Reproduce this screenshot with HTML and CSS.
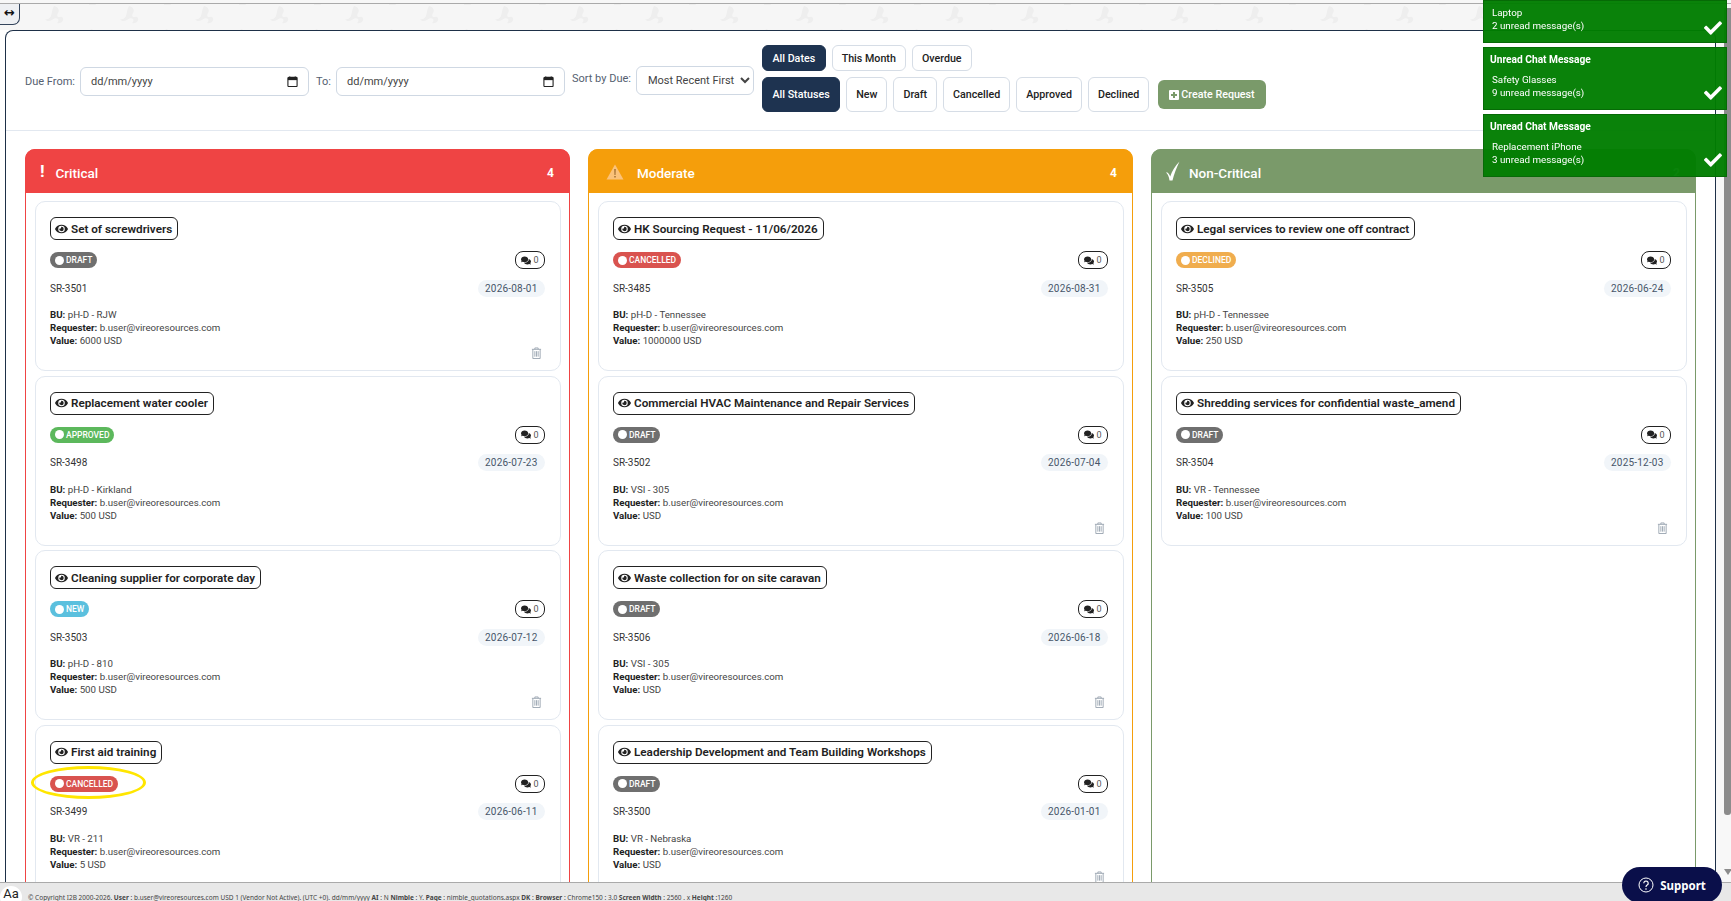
FILE: index.html
```html
<!DOCTYPE html>
<html lang="en">
<head>
  <meta charset="UTF-8">
  <title>Requests</title>
  <link rel="stylesheet" href="styles.css">
</head>
<body>
  <svg class="icon-defs" aria-hidden="true">
    <symbol id="i-eye" viewBox="0 0 576 512"><path d="M572.52 241.4C518.29 135.59 410.93 64 288 64S57.68 135.64 3.48 241.41a32.35 32.35 0 0 0 0 29.19C57.71 376.41 165.07 448 288 448s230.32-71.64 284.52-177.41a32.35 32.35 0 0 0 0-29.19zM288 400a144 144 0 1 1 144-144 143.93 143.93 0 0 1-144 144zm0-240a95.31 95.31 0 0 0-25.31 3.79 47.85 47.85 0 0 1-66.9 66.9A95.78 95.78 0 1 0 288 160z"/></symbol>
    <symbol id="i-comments" viewBox="0 0 576 512"><path d="M416 192c0-88.4-93.1-160-208-160S0 103.6 0 192c0 34.3 14.1 65.9 38 92-13.4 30.2-35.5 54.2-35.8 54.5-2.2 2.3-2.8 5.7-1.5 8.7S4.8 352 8 352c36.6 0 66.9-12.3 88.7-25 32.2 15.7 70.3 25 111.3 25 114.9 0 208-71.6 208-160zm122 220c23.9-26 38-57.7 38-92 0-66.9-53.5-124.2-129.3-148.1.9 6.6 1.3 13.3 1.3 20.1 0 105.9-107.7 192-240 192-10.8 0-21.3-.8-31.7-1.9C207.8 439.6 281.8 480 368 480c41 0 79.1-9.2 111.3-25 21.8 12.7 52.1 25 88.7 25 3.2 0 6.1-1.9 7.3-4.8 1.3-2.9.7-6.3-1.5-8.7-.3-.3-22.4-24.2-35.8-54.5z"/></symbol>
    <symbol id="i-check" viewBox="0 0 512 512"><path d="M173.898 439.404l-166.4-166.4c-9.997-9.997-9.997-26.206 0-36.204l36.203-36.204c9.997-9.998 26.207-9.998 36.204 0L192 312.69 432.095 72.596c9.997-9.997 26.207-9.997 36.204 0l36.203 36.204c9.997 9.997 9.997 26.206 0 36.204l-294.4 294.401c-9.998 9.997-26.207 9.997-36.204-.001z"/></symbol>
    <symbol id="i-trash" viewBox="0 0 12 13"><path d="M1 2.5h10M4.2 2.5V1h3.6v1.5M2 2.5v10h8v-10M4.2 4.5v6M6 4.5v6M7.8 4.5v6" fill="none" stroke="currentColor" stroke-width="1"/></symbol>
    <symbol id="i-calendar" viewBox="0 0 12 12"><path d="M3 0.5v2M9 0.5v2" stroke="#222" stroke-width="1.2"/><rect x="1" y="1.5" width="10" height="10" rx="1" fill="none" stroke="#222" stroke-width="1.2"/><rect x="1" y="1.5" width="10" height="3" fill="#222"/></symbol>
  </svg>

  <div class="toggle-tab">&#8596;</div>

  <div class="top-strip"></div>

  <div class="workspace">
    <div class="frame">
      <div class="filters">
        <div class="date-filters">
          <label class="filter-label">Due From:</label>
          <div class="date-input"><span>dd/mm/yyyy</span><svg class="calendar"><use href="#i-calendar"/></svg></div>
          <label class="filter-label">To:</label>
          <div class="date-input"><span>dd/mm/yyyy</span><svg class="calendar"><use href="#i-calendar"/></svg></div>
        </div>
        <label class="filter-label sort-label">Sort by Due:</label>
        <select class="sort-select">
          <option>Most Recent First</option>
        </select>
        <div class="button-rows">
          <div class="button-row">
            <button class="pill pill-active">All Dates</button>
            <button class="pill">This Month</button>
            <button class="pill">Overdue</button>
          </div>
          <div class="button-row">
            <button class="pill pill-tall pill-active">All Statuses</button>
            <button class="pill pill-tall">New</button>
            <button class="pill pill-tall">Draft</button>
            <button class="pill pill-tall">Cancelled</button>
            <button class="pill pill-tall">Approved</button>
            <button class="pill pill-tall">Declined</button>
            <button class="create-btn"><svg class="plus" viewBox="0 0 10 10"><path d="M1 0h8a1 1 0 0 1 1 1v8a1 1 0 0 1-1 1H1a1 1 0 0 1-1-1V1a1 1 0 0 1 1-1zM4 2v2H2v2h2v2h2V6h2V4H6V2z" fill-rule="evenodd"/></svg>Create Request</button>
          </div>
        </div>
      </div>

      <div class="board">
        <section class="column column-critical">
          <header class="column-head">
            <span class="head-icon head-bang">!</span>
            <span class="head-title">Critical</span>
            <span class="head-count">4</span>
          </header>
          <div class="column-body">
            <article class="card">
              <div class="card-title"><svg class="eye"><use href="#i-eye"/></svg>Set of screwdrivers</div>
              <div class="card-row card-row-status">
                <span class="status status-draft"><i class="dot"></i>DRAFT</span>
                <span class="comments"><svg class="bubble"><use href="#i-comments"/></svg>0</span>
              </div>
              <div class="card-row card-row-ref">
                <span>SR-3501</span>
                <span class="due">2026-08-01</span>
              </div>
              <div class="card-foot">
                <div class="details">
                  <div><b>BU:</b> pH-D - RJW</div>
                  <div><b>Requester:</b> b.user@vireoresources.com</div>
                  <div><b>Value:</b> 6000 USD</div>
                </div>
                <svg class="trash"><use href="#i-trash"/></svg>
              </div>
            </article>
            <article class="card">
              <div class="card-title"><svg class="eye"><use href="#i-eye"/></svg>Replacement water cooler</div>
              <div class="card-row card-row-status">
                <span class="status status-approved"><i class="dot"></i>APPROVED</span>
                <span class="comments"><svg class="bubble"><use href="#i-comments"/></svg>0</span>
              </div>
              <div class="card-row card-row-ref">
                <span>SR-3498</span>
                <span class="due">2026-07-23</span>
              </div>
              <div class="card-foot">
                <div class="details">
                  <div><b>BU:</b> pH-D - Kirkland</div>
                  <div><b>Requester:</b> b.user@vireoresources.com</div>
                  <div><b>Value:</b> 500 USD</div>
                </div>
              </div>
            </article>
            <article class="card">
              <div class="card-title"><svg class="eye"><use href="#i-eye"/></svg>Cleaning supplier for corporate day</div>
              <div class="card-row card-row-status">
                <span class="status status-new"><i class="dot"></i>NEW</span>
                <span class="comments"><svg class="bubble"><use href="#i-comments"/></svg>0</span>
              </div>
              <div class="card-row card-row-ref">
                <span>SR-3503</span>
                <span class="due">2026-07-12</span>
              </div>
              <div class="card-foot">
                <div class="details">
                  <div><b>BU:</b> pH-D - 810</div>
                  <div><b>Requester:</b> b.user@vireoresources.com</div>
                  <div><b>Value:</b> 500 USD</div>
                </div>
                <svg class="trash"><use href="#i-trash"/></svg>
              </div>
            </article>
            <article class="card">
              <div class="card-title"><svg class="eye"><use href="#i-eye"/></svg>First aid training</div>
              <div class="card-row card-row-status">
                <span class="status status-cancelled"><i class="dot"></i>CANCELLED</span>
                <span class="comments"><svg class="bubble"><use href="#i-comments"/></svg>0</span>
              </div>
              <div class="card-row card-row-ref">
                <span>SR-3499</span>
                <span class="due">2026-06-11</span>
              </div>
              <div class="card-foot">
                <div class="details">
                  <div><b>BU:</b> VR - 211</div>
                  <div><b>Requester:</b> b.user@vireoresources.com</div>
                  <div><b>Value:</b> 5 USD</div>
                </div>
              </div>
              <div class="highlight-ring"></div>
            </article>
          </div>
        </section>

        <section class="column column-moderate">
          <header class="column-head">
            <svg class="head-warning" viewBox="0 0 18 16"><path d="M9 0.5L17.5 15.5H0.5z" fill="#fbc27a"/><path d="M8.4 5h1.2l-.2 6h-.8zM8.4 12h1.2v1.6H8.4z" fill="#8a5a20"/></svg>
            <span class="head-title">Moderate</span>
            <span class="head-count">4</span>
          </header>
          <div class="column-body">
            <article class="card">
              <div class="card-title"><svg class="eye"><use href="#i-eye"/></svg>HK Sourcing Request - 11/06/2026</div>
              <div class="card-row card-row-status">
                <span class="status status-cancelled"><i class="dot"></i>CANCELLED</span>
                <span class="comments"><svg class="bubble"><use href="#i-comments"/></svg>0</span>
              </div>
              <div class="card-row card-row-ref">
                <span>SR-3485</span>
                <span class="due">2026-08-31</span>
              </div>
              <div class="card-foot">
                <div class="details">
                  <div><b>BU:</b> pH-D - Tennessee</div>
                  <div><b>Requester:</b> b.user@vireoresources.com</div>
                  <div><b>Value:</b> 1000000 USD</div>
                </div>
              </div>
            </article>
            <article class="card">
              <div class="card-title"><svg class="eye"><use href="#i-eye"/></svg>Commercial HVAC Maintenance and Repair Services</div>
              <div class="card-row card-row-status">
                <span class="status status-draft"><i class="dot"></i>DRAFT</span>
                <span class="comments"><svg class="bubble"><use href="#i-comments"/></svg>0</span>
              </div>
              <div class="card-row card-row-ref">
                <span>SR-3502</span>
                <span class="due">2026-07-04</span>
              </div>
              <div class="card-foot">
                <div class="details">
                  <div><b>BU:</b> VSI - 305</div>
                  <div><b>Requester:</b> b.user@vireoresources.com</div>
                  <div><b>Value:</b> USD</div>
                </div>
                <svg class="trash"><use href="#i-trash"/></svg>
              </div>
            </article>
            <article class="card">
              <div class="card-title"><svg class="eye"><use href="#i-eye"/></svg>Waste collection for on site caravan</div>
              <div class="card-row card-row-status">
                <span class="status status-draft"><i class="dot"></i>DRAFT</span>
                <span class="comments"><svg class="bubble"><use href="#i-comments"/></svg>0</span>
              </div>
              <div class="card-row card-row-ref">
                <span>SR-3506</span>
                <span class="due">2026-06-18</span>
              </div>
              <div class="card-foot">
                <div class="details">
                  <div><b>BU:</b> VSI - 305</div>
                  <div><b>Requester:</b> b.user@vireoresources.com</div>
                  <div><b>Value:</b> USD</div>
                </div>
                <svg class="trash"><use href="#i-trash"/></svg>
              </div>
            </article>
            <article class="card">
              <div class="card-title"><svg class="eye"><use href="#i-eye"/></svg>Leadership Development and Team Building Workshops</div>
              <div class="card-row card-row-status">
                <span class="status status-draft"><i class="dot"></i>DRAFT</span>
                <span class="comments"><svg class="bubble"><use href="#i-comments"/></svg>0</span>
              </div>
              <div class="card-row card-row-ref">
                <span>SR-3500</span>
                <span class="due">2026-01-01</span>
              </div>
              <div class="card-foot">
                <div class="details">
                  <div><b>BU:</b> VR - Nebraska</div>
                  <div><b>Requester:</b> b.user@vireoresources.com</div>
                  <div><b>Value:</b> USD</div>
                </div>
                <svg class="trash"><use href="#i-trash"/></svg>
              </div>
            </article>
          </div>
        </section>

        <section class="column column-noncritical">
          <header class="column-head">
            <svg class="head-tick" viewBox="0 0 14 20"><path d="M.5 11c1.700.6 3 2.300 3.700 4.500C6 10 9 5 13.500.5 10.500 7 8 13 6.500 19.500H3.500C3 16 2 13.500.5 12z" fill="#fff"/></svg>
            <span class="head-title">Non-Critical</span>
            <span class="head-count">2</span>
          </header>
          <div class="column-body">
            <article class="card">
              <div class="card-title"><svg class="eye"><use href="#i-eye"/></svg>Legal services to review one off contract</div>
              <div class="card-row card-row-status">
                <span class="status status-declined"><i class="dot"></i>DECLINED</span>
                <span class="comments"><svg class="bubble"><use href="#i-comments"/></svg>0</span>
              </div>
              <div class="card-row card-row-ref">
                <span>SR-3505</span>
                <span class="due">2026-06-24</span>
              </div>
              <div class="card-foot">
                <div class="details">
                  <div><b>BU:</b> pH-D - Tennessee</div>
                  <div><b>Requester:</b> b.user@vireoresources.com</div>
                  <div><b>Value:</b> 250 USD</div>
                </div>
              </div>
            </article>
            <article class="card">
              <div class="card-title"><svg class="eye"><use href="#i-eye"/></svg>Shredding services for confidential waste_amend</div>
              <div class="card-row card-row-status">
                <span class="status status-draft"><i class="dot"></i>DRAFT</span>
                <span class="comments"><svg class="bubble"><use href="#i-comments"/></svg>0</span>
              </div>
              <div class="card-row card-row-ref">
                <span>SR-3504</span>
                <span class="due">2025-12-03</span>
              </div>
              <div class="card-foot">
                <div class="details">
                  <div><b>BU:</b> VR - Tennessee</div>
                  <div><b>Requester:</b> b.user@vireoresources.com</div>
                  <div><b>Value:</b> 100 USD</div>
                </div>
                <svg class="trash"><use href="#i-trash"/></svg>
              </div>
            </article>
          </div>
        </section>
      </div>
    </div>

    <div class="scrollbar">
      <div class="scroll-thumb"></div>
      <div class="scroll-arrow"></div>
    </div>
  </div>

  <footer class="footer">
    <span class="font-badge">Aa</span>
    <span class="footer-text">&copy; Copyright I2B 2000-2026. <b>User</b> : b.user@vireoresources.com USD 1 (Vendor Not Active). (UTC +0). dd/mm/yyyy <b>AI</b> : N <b>Nimble</b> : Y. <b>Page</b> : nimble_quotations.aspx <b>DK</b> : <b>Browser</b> : Chrome150 : 3.0 <b>Screen Width</b> : 2560 . x <b>Height</b> :1260</span>
  </footer>

  <button class="support-btn">
    <svg class="support-icon" viewBox="0 0 16 16"><circle cx="8" cy="8" r="7" fill="none" stroke="#fff" stroke-width="1"/><path d="M5.8 6.2a2.2 2.2 0 1 1 3.4 1.9c-.8.5-1.2.9-1.2 1.8" fill="none" stroke="#fff" stroke-width="1.2"/><circle cx="8" cy="12" r=".8" fill="#fff"/></svg>
    Support
  </button>

  <div class="toasts">
    <div class="toast toast-first">
      <div class="toast-body">Laptop<br>2 unread message(s)</div>
      <svg class="toast-check"><use href="#i-check"/></svg>
    </div>
    <div class="toast">
      <div class="toast-title">Unread Chat Message</div>
      <div class="toast-body">Safety Glasses<br>9 unread message(s)</div>
      <svg class="toast-check"><use href="#i-check"/></svg>
    </div>
    <div class="toast">
      <div class="toast-title">Unread Chat Message</div>
      <div class="toast-body">Replacement iPhone<br>3 unread message(s)</div>
      <svg class="toast-check"><use href="#i-check"/></svg>
    </div>
  </div>
</body>
</html>
```

FILE: styles.css
```css
* {
  box-sizing: border-box;
}
html, body {
  height: 100%;
}
body {
  margin: 0;
  height: 100vh;
  overflow: hidden;
  display: flex;
  flex-direction: column;
  background: #f7f7f7;
  color: #222;
  font-family: Roboto, "Liberation Sans", sans-serif;
  font-size: 10px;
}
.icon-defs {
  position: absolute;
  width: 0;
  height: 0;
}

.top-strip {
  flex: none;
  height: 27px;
  margin-top: 3px;
  border-top: 1px solid #aaa;
  background-color: #f6f6f6;
  background-image: url("data:image/svg+xml,%3Csvg xmlns='http://www.w3.org/2000/svg' width='75' height='30'%3E%3Cg id='a' fill='%23eeeeee'%3E%3Cpath d='M13 1c4 1 6 4 4 7-1 2-1 3 0 4 2 0 4-1 5 1 1 3-2 6-6 5 1-1 2-2 1-4-1-1-4-1-6 1-3 2-6 1-7-1 3 1 5-1 6-3 1-3 1-7 3-10z'/%3E%3C/g%3E%3Cpath transform='translate(37 23)' fill='%23eeeeee' d='M13 1c4 1 6 4 4 7-1 2-1 3 0 4 2 0 4-1 5 1 1 3-2 6-6 5 1-1 2-2 1-4-1-1-4-1-6 1-3 2-6 1-7-1 3 1 5-1 6-3 1-3 1-7 3-10z'/%3E%3C/svg%3E");
  background-position: 41px 1px;
}
.toggle-tab {
  position: absolute;
  top: 4px;
  left: 0;
  width: 20px;
  height: 21px;
  line-height: 18px;
  text-align: center;
  font-size: 13px;
  font-weight: 700;
  color: #111;
  background: #eef0f3;
  border: 1px solid #33445c;
  border-width: 0 1px 1px 0;
  border-bottom-right-radius: 7px;
  font-family: "DejaVu Sans", sans-serif;
}

.workspace {
  flex: 1;
  min-height: 0;
  display: flex;
  padding-left: 5px;
  background: #fff;
}
.frame {
  flex: 1;
  min-width: 0;
  display: flex;
  flex-direction: column;
  background: #fff;
  border: 1px solid #1e3048;
  border-bottom: 0;
  border-radius: 8px 8px 0 0;
}
.scrollbar {
  flex: none;
  width: 15px;
  margin-top: -22px;
  padding-left: 8px;
  display: flex;
  flex-direction: column;
  background: #f8f8f8;
}
.scroll-thumb {
  height: 807px;
  background: #8c8c8c;
  border-radius: 0 0 3px 3px;
}
.scroll-arrow {
  margin-top: 54px;
  border: 4px solid transparent;
  border-top: 6px solid #8c8c8c;
}

.filters {
  flex: none;
  height: 100px;
  padding: 14px 20px 18px 19px;
  display: flex;
  align-items: center;
  border-bottom: 1px solid #e2e8f0;
}
.date-filters {
  display: flex;
  align-items: center;
  margin-top: 6px;
}
.filter-label {
  font-size: 11px;
  color: #556070;
  margin-right: 5px;
}
.date-input {
  width: 229px;
  height: 29px;
  margin-right: 7px;
  padding: 0 10px;
  display: flex;
  align-items: center;
  justify-content: space-between;
  border: 1px solid #cfd8e3;
  border-radius: 6px;
  background: #fff;
  font-size: 11px;
  color: #444;
}
.calendar {
  width: 11px;
  height: 11px;
}
.sort-select {
  width: 118px;
  height: 29px;
  margin: 4px 8px 0 0;
  padding: 0 0 0 7px;
  border: 1px solid #cfd8e3;
  border-radius: 6px;
  background: #fff;
  color: #444;
  font-family: inherit;
  font-size: 11px;
}
.button-rows {
  display: flex;
  flex-direction: column;
  gap: 6px;
}
.button-row {
  display: flex;
  align-items: center;
  gap: 6px;
}
.pill {
  height: 26px;
  padding: 0 9px;
  border: 1px solid #d6dde6;
  border-radius: 6px;
  background: #fff;
  color: #222;
  font-family: inherit;
  font-size: 10.7px;
  font-weight: 500;
}
.pill-tall {
  height: 35px;
}
.pill-active {
  padding: 0 9.5px;
  background: #1e3350;
  border-color: #1e3350;
  color: #fff;
}
.create-btn {
  height: 29px;
  margin-left: 3px;
  padding: 0 11px;
  display: flex;
  align-items: center;
  gap: 2px;
  border: 0;
  border-radius: 6px;
  background: #7a9a6a;
  color: #fff;
  font-family: inherit;
  font-size: 10.7px;
  font-weight: 500;
}
.plus {
  width: 10px;
  height: 10px;
  fill: #fff;
}

.board {
  flex: 1;
  min-height: 0;
  padding: 18px 19px 0;
  display: grid;
  grid-template-columns: repeat(3, 1fr);
  column-gap: 18px;
  overflow: hidden;
}
.column {
  display: flex;
  flex-direction: column;
  min-height: 100%;
  border: 1px solid var(--tone);
  border-bottom: 0;
  border-radius: 10px 10px 0 0;
}
.column-critical {
  --tone: #ef4444;
}
.column-moderate {
  --tone: #f59e0b;
}
.column-noncritical {
  --tone: #7a9a6a;
}
.column-head {
  flex: none;
  height: 44px;
  margin: -1px -1px 0;
  padding: 3px 16px 0 15px;
  display: flex;
  align-items: center;
  background: var(--tone);
  color: #fff;
  border-radius: 10px 10px 0 0;
}
.head-icon {
  width: 15.5px;
  font-weight: 700;
}
.head-bang {
  font-size: 17px;
  margin-top: -4px;
}
.head-tick {
  width: 14px;
  height: 20px;
  margin: -3px 9px 0 0;
}
.head-warning {
  width: 18px;
  height: 16px;
  margin: -2px 13px 0 3px;
}
.head-title {
  font-size: 13.5px;
  font-weight: 500;
}
.head-count {
  margin-left: auto;
  font-size: 12px;
  font-weight: 700;
}
.column-body {
  padding: 8px 8.5px 0;
  display: flex;
  flex-direction: column;
  gap: 4.67px;
}

.card {
  position: relative;
  flex: none;
  height: 170px;
  padding: 15px 14.5px 0;
  border: 1px solid #e2e8f0;
  border-radius: 10px;
  background: #fff;
}
.card-title {
  display: inline-flex;
  align-items: center;
  gap: 3px;
  height: 23px;
  padding: 0 5px 0 4px;
  border: 1px solid #222;
  border-radius: 6px;
  font-size: 11.7px;
  font-weight: 600;
  color: #222;
}
.eye {
  width: 13px;
  height: 12px;
  fill: #222;
}
.card-row {
  display: flex;
  align-items: center;
  justify-content: space-between;
}
.card-row-status {
  height: 18px;
  margin-top: 11px;
}
.card-row-ref {
  height: 20px;
  margin-top: 9px;
  font-size: 10px;
  color: #333;
}
.status {
  display: inline-flex;
  align-items: center;
  gap: 2px;
  height: 16px;
  padding: 0 5px;
  border-radius: 8px;
  color: #fff;
  font-size: 8.5px;
  font-weight: 500;
}
.dot {
  width: 9px;
  height: 9px;
  border-radius: 50%;
  background: #fff;
}
.status-draft {
  background: #6f6f6f;
}
.status-cancelled {
  background: #d9534f;
}
.status-approved {
  background: #5cb85c;
}
.status-new {
  background: #5bc0de;
}
.status-declined {
  background: #f0ad4e;
}
.comments {
  display: inline-flex;
  align-items: center;
  justify-content: center;
  gap: 2px;
  width: 30px;
  height: 18px;
  border: 1px solid #222;
  border-radius: 8px;
  font-size: 9px;
  color: #555;
}
.bubble {
  width: 10px;
  height: 9px;
  fill: #222;
}
.due {
  padding: 3px 7.5px;
  border-radius: 10px;
  background: #f1f5f9;
  color: #475569;
  font-size: 10px;
  letter-spacing: .2px;
}
.card-foot {
  margin-top: 10px;
  display: flex;
  align-items: flex-end;
  justify-content: space-between;
}
.details {
  line-height: 13px;
  font-size: 9.7px;
  color: #444;
}
.details b {
  color: #222;
  font-weight: 700;
}
.trash {
  width: 11px;
  height: 12px;
  margin: 0 3px -12px 0;
  color: #9aa5b1;
}
.highlight-ring {
  position: absolute;
  left: -5px;
  top: 40px;
  width: 115px;
  height: 33px;
  border: 3.5px solid #ffe600;
  border-radius: 50%;
}

.footer {
  position: relative;
  flex: none;
  height: 19px;
  display: flex;
  align-items: flex-start;
  overflow: hidden;
  background: #e8e8e8;
  border-top: 1px solid #aaa;
}
.font-badge {
  flex: none;
  width: 22px;
  height: 22px;
  margin: 3px 6px 0 0;
  line-height: 15px;
  text-align: center;
  border-radius: 50%;
  background: #fff;
  font-size: 13px;
  color: #222;
}
.footer-text {
  margin-top: 11px;
  font-family: "Noto Sans", sans-serif;
  font-size: 6.5px;
  line-height: 7px;
  color: #444;
  white-space: nowrap;
}

.support-btn {
  position: fixed;
  right: 9px;
  bottom: -2px;
  width: 100px;
  height: 36px;
  display: flex;
  align-items: center;
  justify-content: center;
  gap: 6px;
  border: 0;
  border-radius: 18px;
  background: #0a0f4a;
  color: #fff;
  font-family: "Noto Sans", sans-serif;
  font-size: 11.5px;
  font-weight: 700;
}
.support-icon {
  width: 16px;
  height: 16px;
}

.toasts {
  position: fixed;
  top: 0;
  right: 4px;
  width: 244px;
  display: flex;
  flex-direction: column;
  gap: 4px;
}
.toast {
  position: relative;
  height: 63px;
  padding: 5px 6px 0;
  border: 1px solid #066a06;
  background: rgba(0, 125, 0, .96);
  color: #fff;
}
.toast-first {
  height: 43px;
}
.toast-first .toast-check {
  bottom: 5px;
}
.toast-title {
  height: 13px;
  margin-bottom: 7px;
  font-size: 10.2px;
  font-weight: 700;
  line-height: 13px;
}
.toast-body {
  padding-left: 2px;
  font-size: 9.8px;
  line-height: 13px;
}
.toast-check {
  position: absolute;
  right: 4px;
  bottom: 7px;
  width: 18px;
  height: 18px;
  fill: #fff;
}
```
